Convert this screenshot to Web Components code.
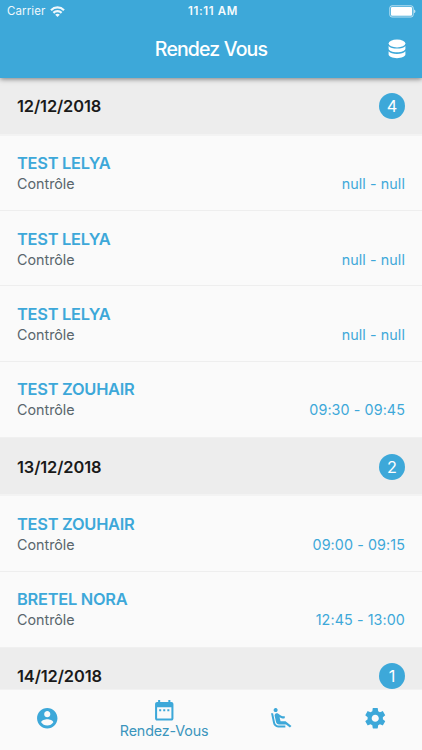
<!DOCTYPE html>
<html lang="fr">
<head>
<meta charset="utf-8">
<meta name="viewport" content="width=device-width, initial-scale=1">
<title>Rendez Vous</title>
<style>
  html, body {
    height: 100%;
    margin: 0;
    overflow: hidden;
  }

  body {
    --accent: #3da8d9;
    --surface: #fafafa;
    --section: #ededed;
    font-family: Inter, "Liberation Sans", sans-serif;
  }
</style>
</head>
<body>
<app-shell>
  <app-header slot="header" label="Rendez Vous"></app-header>

  <day-section date="12/12/2018" count="4">
    <appointment-row name="TEST LELYA" hours="null - null">Contrôle</appointment-row>
    <appointment-row name="TEST LELYA" hours="null - null">Contrôle</appointment-row>
    <appointment-row name="TEST LELYA" hours="null - null">Contrôle</appointment-row>
    <appointment-row name="TEST ZOUHAIR" hours="09:30 - 09:45">Contrôle</appointment-row>
  </day-section>
  <day-section date="13/12/2018" count="2">
    <appointment-row name="TEST ZOUHAIR" hours="09:00 - 09:15">Contrôle</appointment-row>
    <appointment-row name="BRETEL NORA" hours="12:45 - 13:00">Contrôle</appointment-row>
  </day-section>
  <day-section date="14/12/2018" count="1"></day-section>

  <tab-bar slot="footer">
    <tab-item icon="account"></tab-item>
    <tab-item icon="calendar" active>Rendez-Vous</tab-item>
    <tab-item icon="seat"></tab-item>
    <tab-item icon="settings"></tab-item>
  </tab-bar>
</app-shell>

<script>
const ICONS = {
  account: 'M12 2C6.48 2 2 6.48 2 12s4.48 10 10 10 10-4.48 10-10S17.52 2 12 2zm0 3c1.66 0 3 1.34 3 3s-1.34 3-3 3-3-1.34-3-3 1.34-3 3-3zm0 14.2c-2.5 0-4.71-1.28-6-3.22.03-1.99 4-3.08 6-3.08 1.99 0 5.97 1.09 6 3.08-1.29 1.94-3.5 3.22-6 3.22z',
  calendar: 'M9 11H7v2h2v-2zm4 0h-2v2h2v-2zm4 0h-2v2h2v-2zm2-7h-1V2h-2v2H8V2H6v2H5c-1.11 0-1.99.9-1.99 2L3 20c0 1.1.89 2 2 2h14c1.1 0 2-.9 2-2V6c0-1.1-.9-2-2-2zm0 16H5V9h14v11z',
  seat: 'M5.35 5.64c-.9-.64-1.12-1.88-.49-2.79.63-.9 1.88-1.12 2.79-.49.9.64 1.12 1.88.49 2.79-.64.9-1.88 1.12-2.79.49zM16 19H8.93c-1.48 0-2.74-1.08-2.96-2.54L4 7H2l1.99 9.76C4.37 19.2 6.47 21 8.94 21H16v-2zm.23-4h-4.88l-1.03-4.1c1.58.89 3.28 1.54 5.15 1.22V9.99c-1.63.31-3.44-.27-4.69-1.25L9.14 7.47c-.23-.18-.49-.3-.76-.38-.32-.09-.66-.12-.99-.06h-.02c-1.23.22-2.05 1.39-1.84 2.61l1.35 5.92C7.16 16.98 8.39 18 9.83 18h6.85l3.82 3 1.5-1.5-5.77-4.5z',
  settings: 'M19.43 12.98c.04-.32.07-.64.07-.98s-.03-.66-.07-.98l2.11-1.65c.19-.15.24-.42.12-.64l-2-3.46c-.12-.22-.39-.3-.61-.22l-2.49 1c-.52-.4-1.08-.73-1.69-.98l-.38-2.65C14.46 2.18 14.25 2 14 2h-4c-.25 0-.46.18-.49.42l-.38 2.65c-.61.25-1.17.59-1.69.98l-2.49-1c-.23-.09-.49 0-.61.22l-2 3.46c-.13.22-.07.49.12.64l2.11 1.65c-.04.32-.07.65-.07.98s.03.66.07.98l-2.11 1.65c-.19.15-.24.42-.12.64l2 3.46c.12.22.39.3.61.22l2.49-1c.52.4 1.08.73 1.69.98l.38 2.65c.03.24.24.42.49.42h4c.25 0 .46-.18.49-.42l.38-2.65c.61-.25 1.17-.59 1.69-.98l2.49 1c.23.09.49 0 .61-.22l2-3.46c.12-.22.07-.49-.12-.64l-2.11-1.65zM12 15.5c-1.93 0-3.5-1.57-3.5-3.5s1.57-3.5 3.5-3.5 3.5 1.57 3.5 3.5-1.57 3.5-3.5 3.5z'
};

class AppShell extends HTMLElement {
  constructor() {
    super();
    this.attachShadow({ mode: 'open' }).innerHTML = `
      <style>
        :host {
          display: flex;
          flex-direction: column;
          height: 100vh;
          overflow: hidden;
          background: var(--surface);
        }

        main {
          flex: 1;
          min-height: 0;
          overflow: hidden;
        }
      </style>
      <slot name="header"></slot>
      <main><slot></slot></main>
      <slot name="footer"></slot>
    `;
  }
}

class StatusBar extends HTMLElement {
  constructor() {
    super();
    this.attachShadow({ mode: 'open' }).innerHTML = `
      <style>
        :host {
          display: grid;
          grid-template-columns: 1fr auto 1fr;
          align-items: center;
          height: 20px;
          padding: 1px 6px 0 7px;
          font-size: 11.5px;
          line-height: 20px;
          box-sizing: border-box;
          color: #fff;
        }

        .carrier {
          display: flex;
          align-items: center;
          gap: 5px;
          letter-spacing: 0.1px;
          opacity: 0.92;
        }

        .time {
          padding-left: 3px;
          font-weight: 600;
          letter-spacing: 0.65px;
          opacity: 0.95;
        }

        .battery {
          justify-self: end;
        }

        svg {
          display: block;
        }
      </style>
      <div class="carrier">
        <span>Carrier</span>
        <svg width="15" height="11" viewBox="0 0 15 11" fill="none" stroke="#fff" stroke-width="2.2">
          <path d="M1 4.2C4.7.5 10.3.5 14 4.2"/>
          <path d="M3.4 6.9c2.3-2.3 5.9-2.3 8.2 0"/>
          <path d="M7.5 10.9 5.2 8.7c1.2-1.2 3.4-1.2 4.6 0z" fill="#fff" stroke="none"/>
        </svg>
      </div>
      <div class="time">11:11 AM</div>
      <svg class="battery" width="27" height="13" viewBox="0 0 27 13">
        <rect x=".8" y=".8" width="23.4" height="11.2" rx="2.2" fill="none" stroke="#fff" stroke-opacity=".65"/>
        <rect x="2" y="2" width="21" height="8.8" rx="1" fill="#fff"/>
        <path d="M25.2 4.5c1.6.5 1.6 3.3 0 3.8z" fill="#fff" fill-opacity=".8"/>
      </svg>
    `;
  }
}

class AppHeader extends HTMLElement {
  constructor() {
    super();
    this.attachShadow({ mode: 'open' });
  }

  connectedCallback() {
    this.shadowRoot.innerHTML = `
      <style>
        :host {
          display: block;
          flex: none;
          position: relative;
          z-index: 1;
          height: 78px;
          background: var(--accent);
          color: #fff;
          box-shadow: 0 1px 5px rgba(0, 0, 0, 0.5);
        }

        .toolbar {
          display: grid;
          grid-template-columns: 1fr auto 1fr;
          align-items: center;
          height: 58px;
          padding: 0 16px;
        }

        h1 {
          grid-column: 2;
          margin: 0;
          font-size: 19.5px;
          font-weight: 500;
          letter-spacing: -0.85px;
          line-height: 24px;
        }

        svg {
          justify-self: end;
        }
      </style>
      <status-bar></status-bar>
      <div class="toolbar">
        <h1>${this.getAttribute('label')}</h1>
        <svg width="18" height="20" viewBox="0 0 18 20" fill="#fff">
          <ellipse cx="9" cy="4.5" rx="8.4" ry="3.9"/>
          <path d="M.6 6.9c1.5 1.7 4.6 2.7 8.4 2.7s6.9-1 8.4-2.7v2.9c0 1.9-3.8 3.5-8.4 3.5S.6 11.7.6 9.8z"/>
          <path d="M.6 12.3c1.5 1.7 4.6 2.7 8.4 2.7s6.9-1 8.4-2.7v3.3c0 1.9-3.8 3.6-8.4 3.6S.6 17.5.6 15.6z"/>
        </svg>
      </div>
    `;
  }
}

class DaySection extends HTMLElement {
  constructor() {
    super();
    this.attachShadow({ mode: 'open' });
  }

  connectedCallback() {
    this.shadowRoot.innerHTML = `
      <style>
        :host {
          display: block;
        }

        header {
          display: flex;
          align-items: center;
          justify-content: space-between;
          box-sizing: border-box;
          height: 59px;
          padding: 1px 17px 0;
          background: var(--section);
          border-bottom: 2px solid #f3f3f3;
          border-top: 1px solid #f0f0f0;
        }

        :host(:first-of-type) header {
          height: 57.6px;
          padding-top: 0;
        }

        .date {
          font-size: 16.4px;
          font-weight: 600;
          letter-spacing: -0.1px;
          color: #1a1a1a;
        }

        .count {
          display: flex;
          flex: none;
          align-items: center;
          justify-content: center;
          width: 26px;
          height: 26px;
          border-radius: 50%;
          background: var(--accent);
          color: #fff;
          font-size: 16.3px;
        }
      </style>
      <header>
        <span class="date">${this.getAttribute('date')}</span>
        <span class="count">${this.getAttribute('count')}</span>
      </header>
      <slot></slot>
    `;
  }
}

class AppointmentRow extends HTMLElement {
  constructor() {
    super();
    this.attachShadow({ mode: 'open' });
  }

  connectedCallback() {
    this.shadowRoot.innerHTML = `
      <style>
        :host {
          display: block;
          box-sizing: border-box;
          height: 75.4px;
          padding: 16.6px 17px 0;
          border-bottom: 1px solid #eee;
        }

        :host(:last-of-type) {
          border-bottom: none;
        }

        .name {
          font-size: 16.4px;
          font-weight: 600;
          line-height: 22px;
          letter-spacing: -0.25px;
          color: var(--accent);
        }

        .details {
          display: flex;
          justify-content: space-between;
          font-size: 14.3px;
          line-height: 20px;
          color: #59666d;
        }

        .hours {
          color: var(--accent);
          letter-spacing: 0.1px;
        }
      </style>
      <div class="name">${this.getAttribute('name')}</div>
      <div class="details">
        <slot></slot>
        <span class="hours">${this.getAttribute('hours')}</span>
      </div>
    `;
  }
}

class TabBar extends HTMLElement {
  constructor() {
    super();
    this.attachShadow({ mode: 'open' }).innerHTML = `
      <style>
        :host {
          display: flex;
          flex: none;
          position: relative;
          box-sizing: border-box;
          height: 61px;
          background: var(--surface);
          border-top: 1px solid #f2f2f2;
        }
      </style>
      <slot></slot>
    `;
  }
}

class TabItem extends HTMLElement {
  constructor() {
    super();
    this.attachShadow({ mode: 'open' });
  }

  connectedCallback() {
    this.shadowRoot.innerHTML = `
      <style>
        :host {
          display: flex;
          flex: 1;
          flex-direction: column;
          align-items: center;
          justify-content: center;
          padding-bottom: 3px;
          color: var(--accent);
        }

        /* the selected tab is wider and shows its label */
        :host([active]) {
          flex: 1.5;
        }

        svg {
          display: block;
          fill: currentColor;
        }

        span {
          font-size: 14.3px;
          line-height: 17px;
          letter-spacing: -0.14px;
          color: #3b95bd;
        }
      </style>
      <svg width="24.5" height="24.5" viewBox="0 0 24 24"><path d="${ICONS[this.getAttribute('icon')]}"/></svg>
      ${this.hasAttribute('active') ? '<span><slot></slot></span>' : ''}
    `;
  }
}

customElements.define('app-shell', AppShell);
customElements.define('status-bar', StatusBar);
customElements.define('app-header', AppHeader);
customElements.define('day-section', DaySection);
customElements.define('appointment-row', AppointmentRow);
customElements.define('tab-bar', TabBar);
customElements.define('tab-item', TabItem);
</script>
</body>
</html>
